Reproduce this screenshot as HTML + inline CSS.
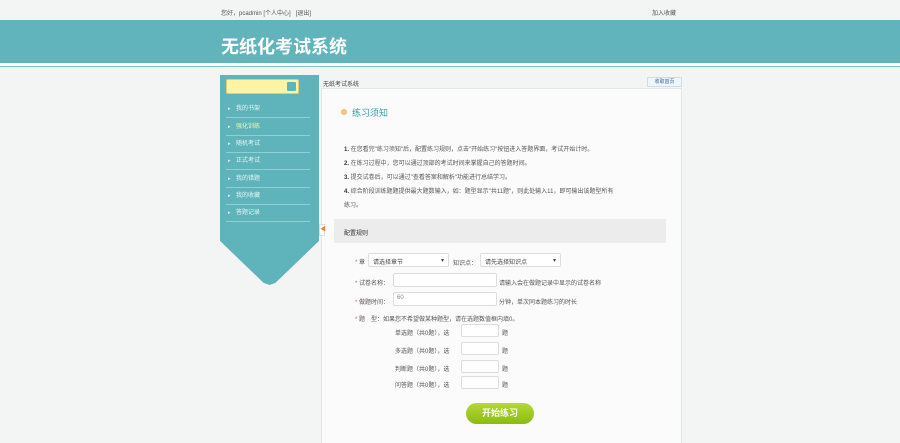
<!DOCTYPE html>
<html><head><meta charset="utf-8"><style>
*{margin:0;padding:0;box-sizing:border-box}
html,body{width:900px;height:443px;overflow:hidden}
body{background:#f3f4f4;font-family:"Liberation Sans","Noto Sans CJK SC",sans-serif;font-size:7px;color:#444;position:relative}
.a{position:absolute}
.top{top:8px;left:221px;font-size:6px;color:#555}
.band{top:20px;left:0;width:900px;height:43px;background:#62b4bc}
.band h1{position:absolute;left:221px;top:13px;font-size:18px;color:#fff;font-weight:bold}
.l1{top:63px;left:0;width:900px;height:3px;background:#fff}
.l2{top:66px;left:0;width:900px;height:1px;background:#7fc3c9}
.side{left:220px;top:75px;width:99px;height:210px;background:#5fb4bb;clip-path:polygon(0 0,100% 0,100% 79%,56% 99%,50% 100%,44% 99%,0 79%)}
.sel{left:226px;top:79px;width:73px;height:15px;background:#fdf3a2;border:1px solid #d9cf7a;border-radius:2px}
.sel i{position:absolute;right:2px;top:2px;width:9px;height:9px;background:#5fb4bb;border-radius:1px}
.mi{left:226px;width:84px;height:17px;border-bottom:1px solid #8fd0d5;color:#e8f5f5;font-size:6px;padding-left:10px;line-height:17px}
.mi:before{content:"▸";position:absolute;left:2px;font-size:5px}
.panel{left:321px;top:88px;width:361px;height:360px;background:#fbfbfb;border:1px solid #e6e6e6}
.crumb{left:323px;top:79px;font-size:6px}
.btn1{left:647px;top:77px;width:35px;height:10px;background:#eef6fa;border:1px solid #cde;font-size:5px;color:#468;text-align:center;line-height:9px}
.ttl{left:352px;top:106px;font-size:9px;color:#3e9ba3}
.dot{left:341px;top:109px;width:6px;height:6px;border-radius:50%;background:#f5c27a}
.ins{left:344px;font-size:6px;color:#555}
.ins b{color:#333}
.bar{left:334px;top:219px;width:332px;height:24px;background:#ececec;font-size:6px;padding:9px 10px;color:#333}
.f{font-size:6px;color:#555}
.box{position:absolute;background:#fff;border:1px solid #ddd;border-radius:2px}
.go{left:466px;top:403px;width:68px;height:21px;border-radius:11px;background:linear-gradient(#b5d838,#8cbc10);color:#fff;font-size:9px;text-align:center;line-height:21px;font-weight:bold}
</style></head><body>
<div class="a top">您好，pcadmin [个人中心] &nbsp; [退出]</div>
<div class="a top" style="left:652px">加入收藏</div>
<div class="a band"><h1>无纸化考试系统</h1></div>
<div class="a l1"></div><div class="a l2"></div>
<div class="a side"></div>
<div class="a sel"><i></i></div>
<div class="a mi" style="top:101px">我的书架</div>
<div class="a mi" style="top:119px;color:#f3f9a8">强化训练</div>
<div class="a mi" style="top:136px">随机考试</div>
<div class="a mi" style="top:153px">正式考试</div>
<div class="a mi" style="top:171px">我的错题</div>
<div class="a mi" style="top:188px">我的收藏</div>
<div class="a mi" style="top:205px">答题记录</div>
<div class="a crumb">无纸考试系统</div>
<div class="a btn1">收取首页</div>
<div class="a panel"></div>
<div class="a" style="left:319px;top:224px;width:6px;height:12px;background:#fff;border:1px solid #ddd;color:#e08a2a;font-size:6px;line-height:10px">◀</div>
<div class="a dot"></div><div class="a ttl">练习须知</div>
<div class="a ins" style="top:144px"><b>1.</b> 在您看完"练习须知"后，配置练习规则，点击"开始练习"按钮进入答题界面，考试开始计时。</div>
<div class="a ins" style="top:158px"><b>2.</b> 在练习过程中，您可以通过顶部的考试时间来掌握自己的答题时间。</div>
<div class="a ins" style="top:172px"><b>3.</b> 提交试卷后，可以通过"查看答案和解析"功能进行总结学习。</div>
<div class="a ins" style="top:186px"><b>4.</b> 综合阶段训练题题提供最大题数输入，如：题型显示"共11题"，则此处输入11，即可输出该题型所有</div>
<div class="a ins" style="top:200px">练习。</div>
<div class="a bar">配置规则</div>
<div class="a f" style="left:355px;top:257px"><span style="color:#e55">*</span> 章</div>
<div class="box" style="left:368px;top:253px;width:81px;height:14px;font-size:6px;padding:3px 4px">请选择章节<span style="float:right">▾</span></div>
<div class="a f" style="left:453px;top:258px">知识点：</div>
<div class="box" style="left:480px;top:253px;width:81px;height:14px;font-size:6px;padding:3px 4px">请先选择知识点<span style="float:right">▾</span></div>
<div class="a f" style="left:355px;top:278px"><span style="color:#e55">*</span> 试卷名称：</div>
<div class="box" style="left:393px;top:273px;width:104px;height:14px"></div>
<div class="a f" style="left:499px;top:278px">请输入会在做题记录中显示的试卷名称</div>
<div class="a f" style="left:355px;top:297px"><span style="color:#e55">*</span> 做题时间：</div>
<div class="box" style="left:393px;top:292px;width:104px;height:14px;font-size:6px;padding:2px 3px;color:#888">60</div>
<div class="a f" style="left:499px;top:297px">分钟，单次同本题练习的时长</div>
<div class="a f" style="left:355px;top:314px"><span style="color:#e55">*</span> 题　型：如果您不希望做某种题型，请在选题数值框内填0。</div>
<div class="a f" style="left:395px;top:328px">单选题（共0题），选</div><div class="box" style="left:461px;top:324px;width:38px;height:13px"></div><div class="a f" style="left:502px;top:328px">题</div>
<div class="a f" style="left:395px;top:346px">多选题（共0题），选</div><div class="box" style="left:461px;top:342px;width:38px;height:13px"></div><div class="a f" style="left:502px;top:346px">题</div>
<div class="a f" style="left:395px;top:364px">判断题（共0题），选</div><div class="box" style="left:461px;top:360px;width:38px;height:13px"></div><div class="a f" style="left:502px;top:364px">题</div>
<div class="a f" style="left:395px;top:380px">问答题（共0题），选</div><div class="box" style="left:461px;top:376px;width:38px;height:13px"></div><div class="a f" style="left:502px;top:380px">题</div>
<div class="a go">开始练习</div>
</body></html>
